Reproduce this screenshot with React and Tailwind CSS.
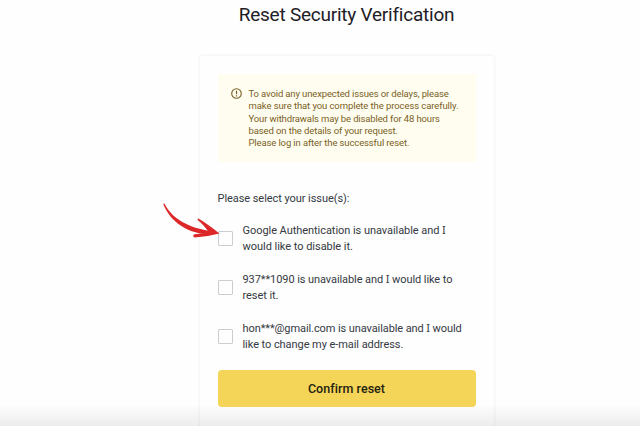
import React, { useState } from "react";

const notice = [
  { text: "To avoid any unexpected issues or delays, please", spacing: "tracking-[-0.135px]" },
  { text: "make sure that you complete the process carefully.", spacing: "tracking-[-0.09px]" },
  { text: "Your withdrawals may be disabled for 48 hours", spacing: "tracking-[-0.135px]" },
  { text: "based on the details of your request.", spacing: "tracking-[-0.11px]" },
  { text: "Please log in after the successful reset.", spacing: "tracking-[-0.125px]" },
];

const issues = [
  {
    id: "google",
    lines: [
      { text: "Google Authentication is unavailable and I", spacing: "tracking-[-0.05px]" },
      { text: "would like to disable it.", spacing: "tracking-[-0.03px]" },
    ],
  },
  {
    id: "phone",
    lines: [
      { text: "937**1090 is unavailable and I would like to", spacing: "tracking-[-0.08px]" },
      { text: "reset it.", spacing: "tracking-[-0.06px]" },
    ],
  },
  {
    id: "email",
    lines: [
      { text: "hon***@gmail.com is unavailable and I would", spacing: "tracking-[-0.09px]" },
      { text: "like to change my e-mail address.", spacing: "tracking-[-0.06px]" },
    ],
  },
];

const Lines = ({ lines }) =>
  lines.map((line) => (
    <span key={line.text} className={`block w-max whitespace-nowrap ${line.spacing}`}>
      {line.text.split(/\b(I)\b/).map((part, i) =>
        part === "I" ? (
          <span key={i} className="font-['Noto_Sans',sans-serif] leading-none">I</span>
        ) : (
          part
        )
      )}
    </span>
  ));

const Arrow = () => (
  <svg
    className="absolute -left-[56px] -top-[29px] pointer-events-none"
    width="60"
    height="38"
    viewBox="0 0 60 38"
    fill="#dc2828"
  >
    <path d="M1.2 2 L2.4 1.6 C9 14.5 22 24.5 46 28.8 L50 31.6 L41 32 C20 28.5 7 16.5 1.2 2Z" />
    <path d="M36.2 16.4 C43 20.4 52 26.5 57.4 31.6 C50 33.6 42 34.9 32.6 35.4 C30.8 34.8 30.8 32.8 32.6 32.3 L47 30.8 C44.5 26.5 40 21.5 35.4 17.8Z" />
  </svg>
);

const App = () => {
  const [selected, setSelected] = useState([]);

  const toggle = (id) => {
    setSelected((prev) =>
      prev.includes(id) ? prev.filter((item) => item !== id) : [...prev, id]
    );
  };

  return (
    <div className="relative h-[426px] overflow-hidden bg-[#fefefe] pl-[53px] flex flex-col items-center font-['Roboto','Liberation_Sans',sans-serif] text-[#343942]">
      <h1 className="mt-[2px] h-[26px] leading-[26px] text-[19px] tracking-[-0.23px] text-[#1e2026] whitespace-nowrap">
        Reset Security Verification
      </h1>

      <div className="mt-[27px] w-[296px] h-[390px] shrink-0 rounded-[3px] border border-[#f6f6f6] bg-[#fefefe] px-[18px] pt-[18px] shadow-[0_0_3px_rgba(0,0,0,0.04)]">
        <div className="flex h-[88px] bg-[#fffdf0] pl-[13px] pt-[14px] text-[#795f25]">
          <svg className="mr-[7px] shrink-0" width="11" height="11" viewBox="0 0 11 11" fill="none" stroke="currentColor">
            <circle cx="5.5" cy="5.5" r="4.8" strokeWidth="1.1" />
            <path d="M5.5 2.7v3.5M5.5 7.2v1.2" strokeWidth="1.2" />
          </svg>
          <p className="text-[9.5px] leading-[12.25px]">
            <Lines lines={notice} />
          </p>
        </div>

        <p className="mt-[29px] h-[16px] leading-[16px] text-[11px] w-max whitespace-nowrap tracking-[-0.06px]">
          Please select your issue(s):
        </p>

        <div className="mt-[16px] flex flex-col gap-[18px]">
          {issues.map((issue) => (
            <label key={issue.id} className="flex h-[31px] cursor-pointer">
              <span className="relative mt-[8px] mr-[10px] h-[15px] w-[15px] shrink-0">
                <input
                  type="checkbox"
                  checked={selected.includes(issue.id)}
                  onChange={() => toggle(issue.id)}
                  className="block h-[15px] w-[15px] appearance-none rounded-[1px] border border-[#cccdcf] checked:bg-[#f4d558]"
                />
                {issue.id === "google" && <Arrow />}
              </span>
              <span className="text-[11px] leading-[15.5px]">
                <Lines lines={issue.lines} />
              </span>
            </label>
          ))}
        </div>

        <button
          type="button"
          className="mt-[18px] block h-[37px] w-full rounded-[4px] bg-[#f4d558] pt-[1px] text-[12.5px] font-medium text-[#24230f]"
        >
          <span className="tracking-[0.05px]">Confirm reset</span>
        </button>
      </div>

      <div className="absolute inset-x-0 bottom-0 h-[22px] bg-linear-to-b from-transparent to-black/7 pointer-events-none" />
    </div>
  );
};

export default App;
